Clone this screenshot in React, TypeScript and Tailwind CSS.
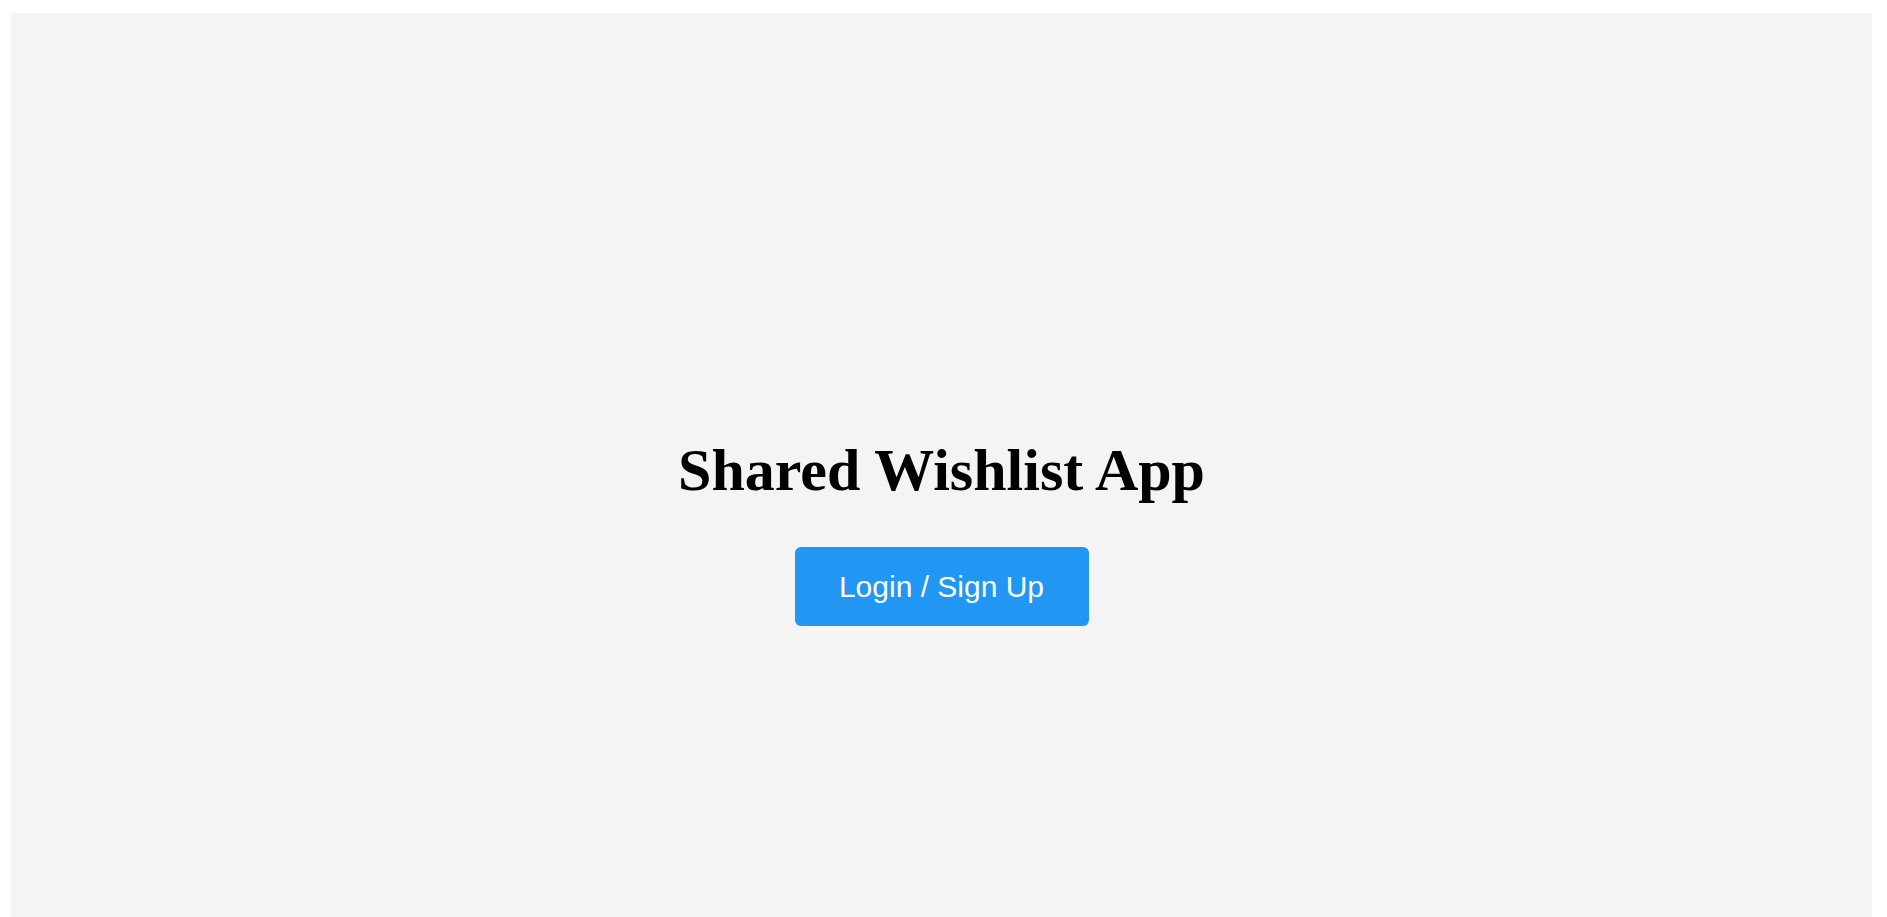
import React from 'react'

const App: React.FC = () => {
  return (
    <div className="min-h-screen bg-white pt-[13px] pl-[11px] pr-[15px]">
      <div className="h-[904px] bg-[#f4f4f4] flex flex-col items-center pt-[423px]">
        {/* Title */}
        <h1
          className="text-[60px] leading-[68px] font-bold text-black"
          style={{ fontFamily: '"Liberation Serif", "Times New Roman", serif' }}
        >
          Shared Wishlist App
        </h1>

        {/* Login */}
        <button
          className="mt-[43px] w-[294px] h-[79px] flex items-center justify-center rounded-md bg-[#2196f3] text-white text-[30px] leading-none"
          style={{ fontFamily: '"Liberation Sans", Arial, sans-serif' }}
        >
          Login / Sign Up
        </button>
      </div>
    </div>
  )
}

export default App
